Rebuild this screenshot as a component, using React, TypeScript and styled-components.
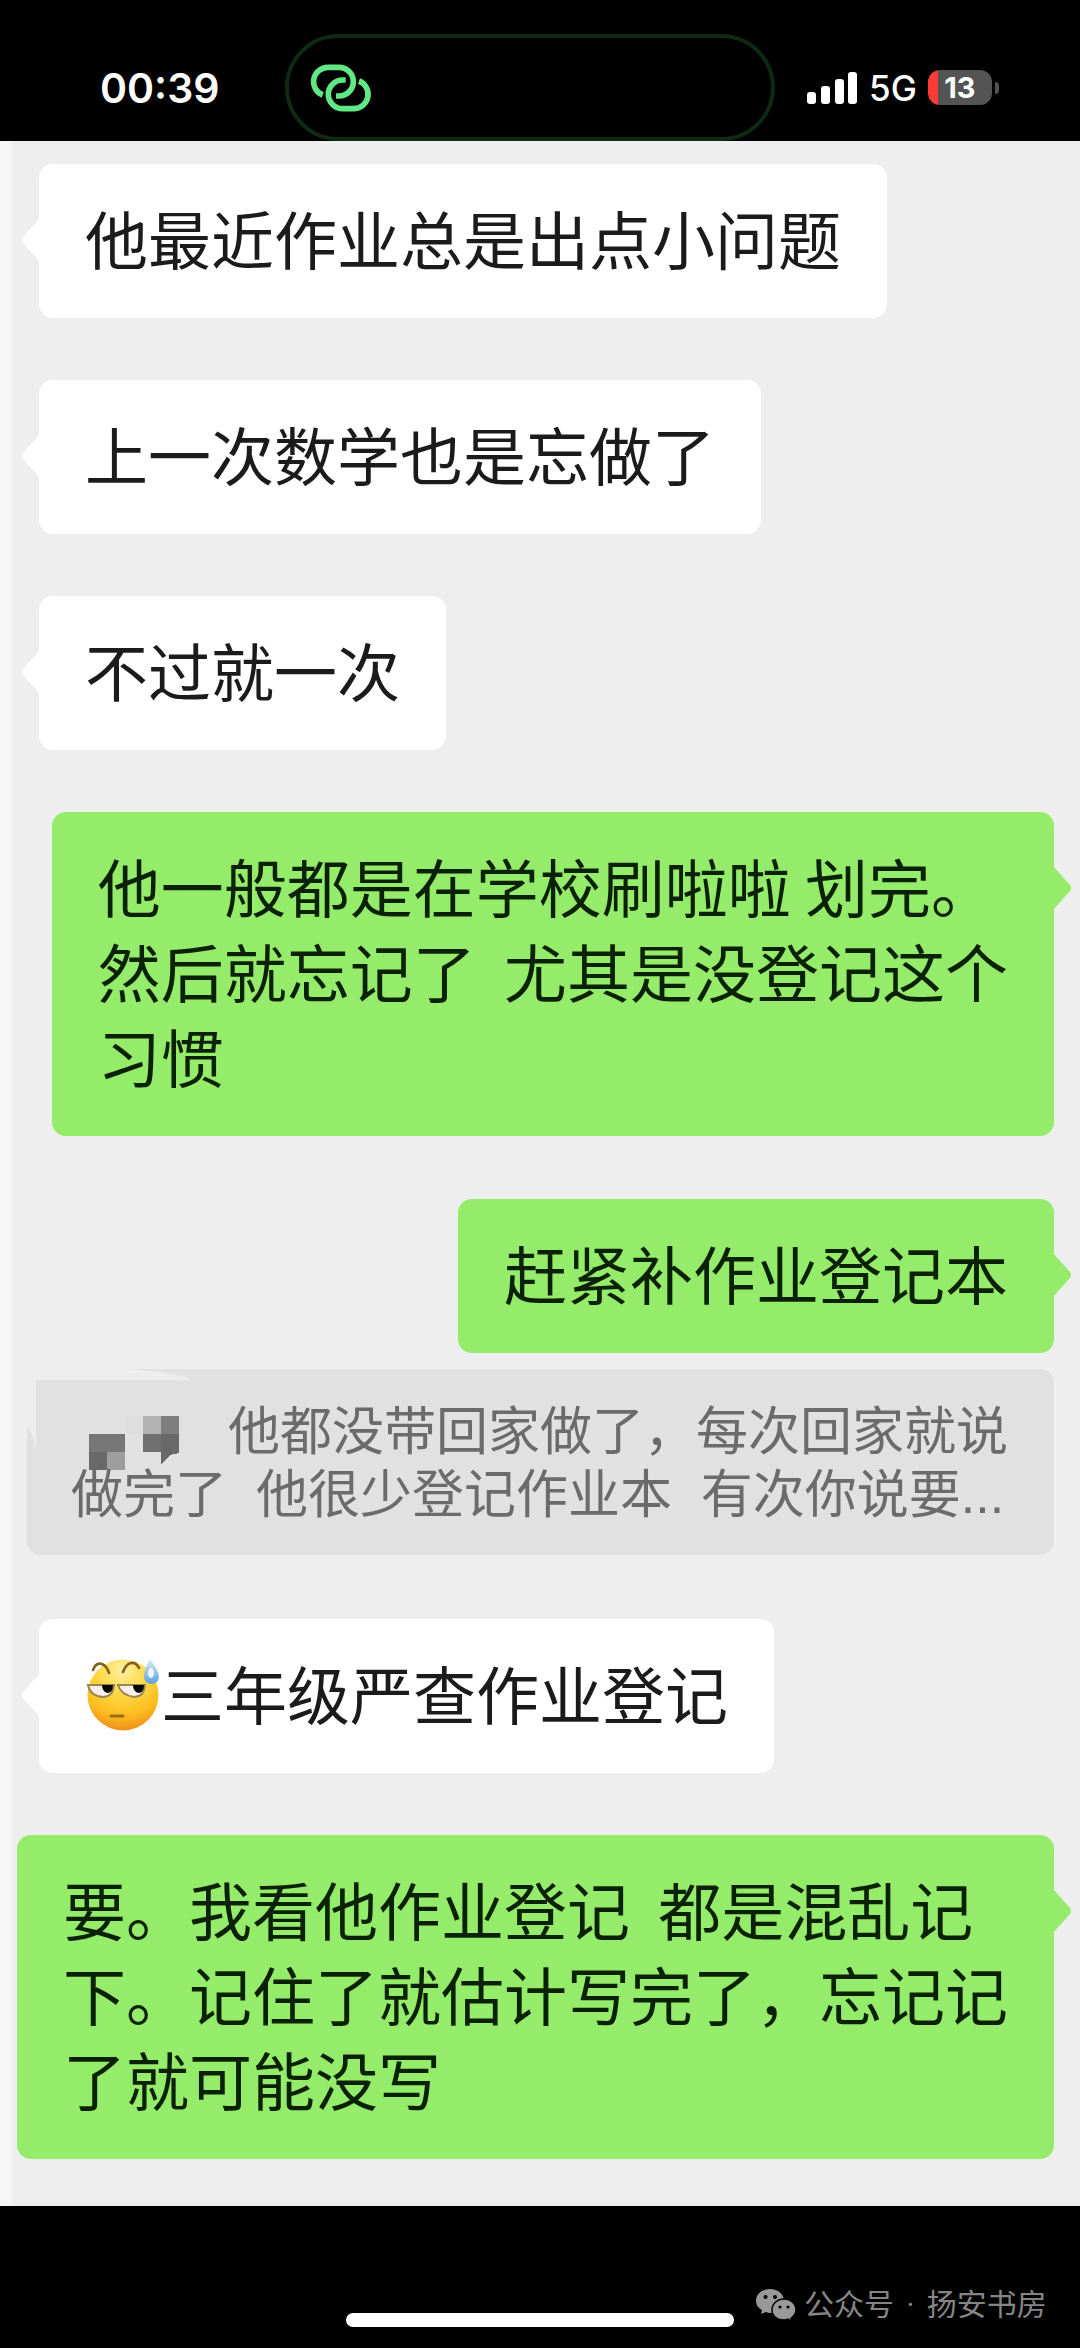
import React from "react";
import styled, { createGlobalStyle, css } from "styled-components";

const GlobalStyle = createGlobalStyle`
  *, *::before, *::after { box-sizing: border-box; }
  body {
    margin: 0;
    background: #000;
    font-family: "Noto Sans CJK SC", "Noto Sans", sans-serif;
  }
`;

const Screen = styled.div`
  display: flex;
  flex-direction: column;
  background: #000;
`;

const StatusBar = styled.header`
  display: grid;
  grid-template-columns: 285fr 490fr 305fr;
  align-items: center;
  padding-top: 34px;
  color: #fff;
  font-family: Inter, "Liberation Sans", sans-serif;
`;

const Clock = styled.time`
  padding-left: 100px;
  font-size: 41px;
  font-weight: 600;
`;

const Island = styled.div`
  display: flex;
  align-items: center;
  height: 107px;
  padding-left: 21px;
  border: 4px solid #0f2a12;
  border-radius: 54px;
`;

const Indicators = styled.div`
  display: flex;
  align-items: center;
  padding-left: 32px;
`;

const Network = styled.span`
  margin: 0 11px;
  font-size: 35px;
  font-weight: 500;
`;

const Battery = styled.div`
  display: flex;
  align-items: center;
  justify-content: center;
  width: 64px;
  height: 35px;
  border-radius: 12px;
  background: linear-gradient(to right, #fb3b36 10px, #545454 10px);
  font-size: 29px;
  font-weight: 700;
`;

const BatteryCap = styled.div`
  width: 4px;
  height: 12px;
  margin-left: 3px;
  border-radius: 0 4px 4px 0;
  background: #545454;
`;

const Chat = styled.main`
  display: flex;
  flex-direction: column;
  gap: 62px;
  padding: 23px 26px 47px 27px;
  border-left: 12px solid #f6f6f6;
  background: #eee;
`;

const Group = styled.div`
  display: flex;
  flex-direction: column;
  gap: 16px;
  padding: 1px 0 2px;
`;

const tailLeft = css`
  left: -18px;
  clip-path: path("M19 0 L2 19 Q0 22 2 25 L19 44 Z");
`;

const tailRight = css`
  right: -18px;
  clip-path: path("M0 0 L17 19 Q19 22 17 25 L0 44 Z");
`;

const Bubble = styled.p<{ $mine?: boolean }>`
  position: relative;
  align-self: ${(p) => (p.$mine ? "flex-end" : "flex-start")};
  margin: 0 0 0 ${(p) => (p.$mine ? "-23px" : "0")};
  padding: 30px 46px 39px;
  border-radius: 14px;
  background: ${(p) => (p.$mine ? "#95ec6b" : "#fff")};
  color: ${(p) => (p.$mine ? "#0b2103" : "#1b1b1b")};
  font-size: 63px;
  line-height: 85px;
  white-space: pre-wrap;
  text-spacing-trim: space-all;

  &::before {
    content: "";
    position: absolute;
    top: 54px;
    width: 19px;
    height: 44px;
    background: inherit;
    ${(p) => (p.$mine ? tailRight : tailLeft)}
  }
`;

const Quote = styled.blockquote`
  position: relative;
  margin: 0 0 0 -12px;
  padding: 32px 36px 28px 44px;
  border-radius: 14px;
  background: #e1e1e1;
  color: #6b6b6b;
  font-family: "Liberation Sans", "Noto Sans CJK SC", sans-serif;
  font-size: 52px;
  line-height: 63px;
  white-space: pre;
  text-spacing-trim: space-all;
`;

const Smudge = styled.svg`
  position: absolute;
  top: 0;
  left: 0;
`;

const Mosaic = styled.svg`
  overflow: visible;
  vertical-align: top;
`;

const Emoji = styled.svg`
  vertical-align: top;
`;

const Footer = styled.footer`
  display: grid;
  grid-template-columns: 1fr 388px 1fr;
  align-items: end;
  padding: 76px 0 21px;
`;

const HomeIndicator = styled.div`
  grid-column: 2;
  height: 14px;
  border-radius: 7px;
  background: #fff;
`;

const Watermark = styled.div`
  display: flex;
  align-items: center;
  gap: 8px;
  padding-left: 22px;
  color: #858585;
  font-family: Roboto, "Noto Sans CJK SC", sans-serif;
  font-size: 30px;
  line-height: 45px;
  white-space: nowrap;
`;

const Separator = styled.span`
  margin: 0 5px;
`;

const LinkIcon = () => (
  <svg width="62" height="50" viewBox="120 124 186 150" fill="none" stroke="#5fe884" strokeWidth="17" aria-label="link">
    <path d="M158 220 A43 43 0 0 1 174 137 H207 A43 43 0 0 1 207 223 H198" />
    <path d="M267 178 A43 43 0 0 1 251 261 H218 A43 43 0 0 1 218 175 H227" />
  </svg>
);

const SignalIcon = () => (
  <svg width="51" height="32" viewBox="0 0 51 32" fill="#fff" aria-label="signal">
    <rect x="0" y="20" width="9" height="12" rx="3" />
    <rect x="14" y="14" width="9" height="18" rx="3" />
    <rect x="28" y="7" width="9" height="25" rx="3" />
    <rect x="41" y="0" width="9" height="32" rx="3" />
  </svg>
);

const SweatFace = () => (
  <Emoji width="76" height="85" viewBox="0 -3 76 85" role="img" aria-label="sweat">
    <defs>
      <radialGradient id="face" cx="0.5" cy="0.15" r="0.9">
        <stop offset="0" stopColor="#fdf0a4" />
        <stop offset="0.35" stopColor="#fddb4a" />
        <stop offset="0.7" stopColor="#fdbe1f" />
        <stop offset="1" stopColor="#ea8618" />
      </radialGradient>
      <linearGradient id="drop" x1="0" y1="0" x2="0" y2="1">
        <stop offset="0" stopColor="#d9ecf8" />
        <stop offset="1" stopColor="#5ba4dc" />
      </linearGradient>
    </defs>
    <circle cx="38" cy="43" r="35.5" fill="url(#face)" />
    <g fill="none" stroke="#80601f" strokeWidth="2.6" strokeLinecap="round">
      <path d="M8 18 Q11 10 17 12 Q22 14 24 21" />
      <path d="M38 20 Q41 12 46 11 Q51 10 54 16" />
    </g>
    <g stroke="#9b8550" strokeWidth="2">
      <path d="M3 33 H29 Q28 45 18 45 Q5 44 3 33 Z" fill="#f6efea" />
      <path d="M33 33 H60 Q59 45 49 45 Q36 43 33 33 Z" fill="#f6efea" />
    </g>
    <path d="M17 33 H28 Q28 41 22 41 Q17 39 17 33 Z" fill="#0a0805" />
    <path d="M48 33 H59 Q59 41 53 41 Q48 39 48 33 Z" fill="#0a0805" />
    <path d="M26 64 H38" stroke="#9b6c16" strokeWidth="3" strokeLinecap="round" />
    <path d="M65 7 Q74 19 74 25 A7.5 7 0 0 1 59 25 Q59 17 65 7 Z" fill="url(#drop)" />
    <ellipse cx="66" cy="21" rx="3" ry="5" fill="#fff" opacity="0.85" />
  </Emoji>
);

const HiddenName = () => (
  <Mosaic width="157" height="63" viewBox="0 2 157 63" shapeRendering="crispEdges" aria-hidden="true">
    <rect x="18" y="35" width="36" height="18" fill="#777" />
    <rect x="18" y="53" width="18" height="18" fill="#696969" />
    <rect x="36" y="53" width="18" height="18" fill="#9d9d9d" />
    <rect x="54" y="17" width="18" height="18" fill="#dedede" />
    <rect x="72" y="17" width="18" height="18" fill="#b2b2b2" />
    <rect x="90" y="17" width="18" height="18" fill="#7f7f7f" />
    <rect x="72" y="35" width="18" height="18" fill="#707070" />
    <path d="M90 35 H108 V54 L99 56 L90 65 Z" fill="#696969" />
  </Mosaic>
);

const WeChatIcon = () => (
  <svg width="40" height="34" viewBox="0 0 40 34" aria-hidden="true">
    <path d="M14 1 C6 1 0 6 0 13 C0 17 2 20 6 22 L5 26 L10 24 Q12 25 14 25 C22 25 28 20 28 13 C28 6 22 1 14 1 Z" fill="#999" />
    <path
      d="M28 11 C21 11 16 16 16 22 C16 28 21 32 28 32 Q30 32 32 31 L36 33.500 L35 30 C38 28 40 25 40 22 C40 16 35 11 28 11 Z"
      fill="#999"
      stroke="#000"
      strokeWidth="1.500"
    />
    <g fill="#000">
      <circle cx="9.500" cy="9" r="2" />
      <circle cx="19" cy="9" r="2" />
      <circle cx="24" cy="19" r="1.600" />
      <circle cx="32" cy="19" r="1.600" />
    </g>
  </svg>
);

export default function App() {
  return (
    <Screen>
      <GlobalStyle />
      <StatusBar>
        <Clock>00:39</Clock>
        <Island>
          <LinkIcon />
        </Island>
        <Indicators>
          <SignalIcon />
          <Network>5G</Network>
          <Battery>13</Battery>
          <BatteryCap />
        </Indicators>
      </StatusBar>
      <Chat>
        <Bubble>他最近作业总是出点小问题</Bubble>
        <Bubble>上一次数学也是忘做了</Bubble>
        <Bubble>不过就一次</Bubble>
        <Bubble $mine>{"他一般都是在学校刷啦啦 划完。\n然后就忘记了  尤其是没登记这个\n习惯"}</Bubble>
        <Group>
          <Bubble $mine>赶紧补作业登记本</Bubble>
          <Quote>
            <Smudge width="165" height="82" viewBox="0 0 165 82" fill="#eee" aria-hidden="true">
              <path d="M0 0 H98 Q150 3 164 11 H9 V81 Q7 66 0 57 Z" />
            </Smudge>
            <HiddenName />
            {"他都没带回家做了，每次回家就说\n做完了  他很少登记作业本  有次你说要..."}
          </Quote>
        </Group>
        <Bubble>
          <SweatFace />
          三年级严查作业登记
        </Bubble>
        <Bubble $mine>{"要。我看他作业登记  都是混乱记\n下。记住了就估计写完了，忘记记\n了就可能没写"}</Bubble>
      </Chat>
      <Footer>
        <HomeIndicator />
        <Watermark>
          <WeChatIcon />
          <span>
            公众号 <Separator>·</Separator> 扬安书房
          </span>
        </Watermark>
      </Footer>
    </Screen>
  );
}
